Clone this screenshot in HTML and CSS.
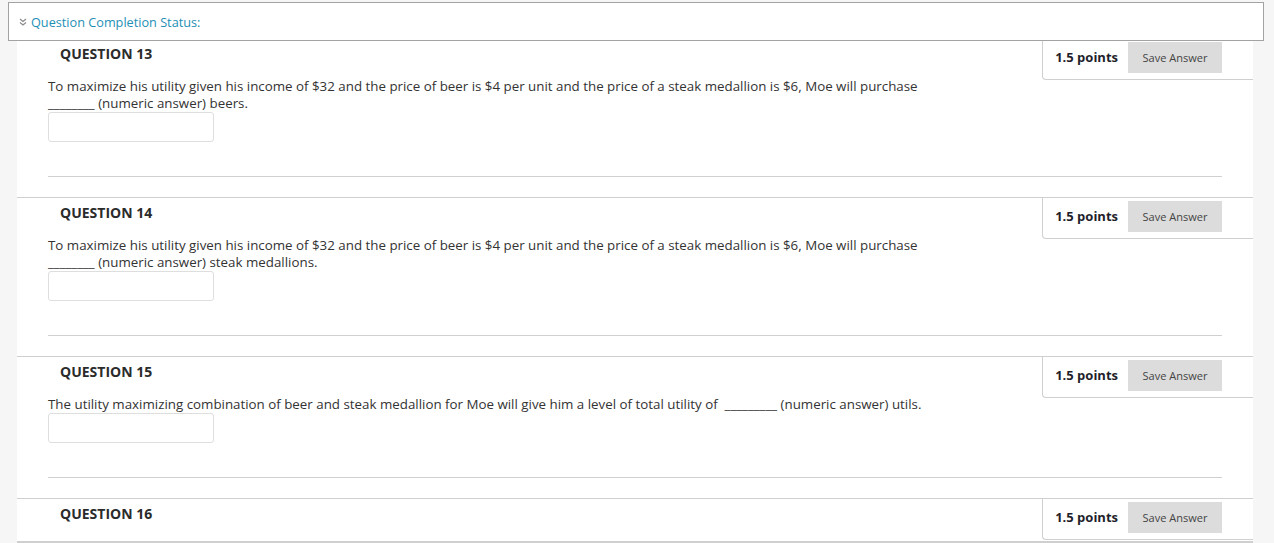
FILE: index.html
```html
<!DOCTYPE html>
<html>
<head>
	<meta charset="utf-8">
	<meta name="viewport" content="width=device-width, initial-scale=1">
	<title>Take Test</title>

	<link rel="stylesheet" href="styles.css">
</head>
<body>
	<div class="status-bar">
		<svg class="chev" width="8" height="8" viewBox="0 0 8 8"><path d="M1 1 L4 3.5 L7 1 M1 4.5 L4 7 L7 4.5" fill="none" stroke="#8a8a8a" stroke-width="1.2"/></svg>
		<span>Question Completion Status:</span>
	</div>

	<main>
		<ul class="questions">
			<li class="question">
				<div class="points">
					<span class="pts">1.5 points</span>
					<button class="save">Save Answer</button>
				</div>
				<h3>QUESTION 13</h3>
				<div class="q-body">
					<p>To maximize his utility given his income of $32 and the price of beer is $4 per unit and the price of a steak medallion is $6, Moe will purchase ________ (numeric answer) beers.</p>
					<input type="text" class="answer">
					<hr>
				</div>
			</li>
			<li class="question">
				<div class="points">
					<span class="pts">1.5 points</span>
					<button class="save">Save Answer</button>
				</div>
				<h3>QUESTION 14</h3>
				<div class="q-body">
					<p>To maximize his utility given his income of $32 and the price of beer is $4 per unit and the price of a steak medallion is $6, Moe will purchase ________ (numeric answer) steak medallions.</p>
					<input type="text" class="answer">
					<hr>
				</div>
			</li>
			<li class="question">
				<div class="points">
					<span class="pts">1.5 points</span>
					<button class="save">Save Answer</button>
				</div>
				<h3>QUESTION 15</h3>
				<div class="q-body">
					<p>The utility maximizing combination of beer and steak medallion for Moe will give him a level of total utility of &nbsp;_________ (numeric answer) utils.</p>
					<input type="text" class="answer">
					<hr>
				</div>
			</li>
			<li class="question">
				<div class="points">
					<span class="pts">1.5 points</span>
					<button class="save">Save Answer</button>
				</div>
				<h3>QUESTION 16</h3>
				<div class="q-body">
					<p>At the utility maximizing combination of beer and steak medallion, the marginal utility per dollar spent on beer is equal to ________ (numeric answer).</p>
					<input type="text" class="answer">
					<hr>
				</div>
			</li>
		</ul>
	</main>
	<div class="bottom-edge"></div>
</body>
</html>
```

FILE: styles.css
```css
* {
	margin: 0;
	padding: 0;
	box-sizing: border-box;
}

body {
	font-family: "Open Sans", "Noto Sans", sans-serif;
	color: #333;
	background: #f6f6f6;
	overflow: hidden;
}

/* sticky status header */
.status-bar {
	position: fixed;
	top: 2px;
	left: 8px;
	width: 1256px;
	height: 39px;
	display: flex;
	align-items: center;
	gap: 4px;
	padding-left: 10px;
	background: #fff;
	border: 1px solid #a3a3a3;
	font-size: 12.7px;
	color: #1e8fb5;
	z-index: 5;
}

.status-bar .chev {
	margin-top: 1px;
}

main {
	width: 1236px;
	margin: 38px 0 0 17px;
	background: #fff;
}

.questions {
	list-style: none;
}

.question {
	border-top: 1px solid #cfcfcf;
	padding-bottom: 20px;
}

.points {
	float: right;
	display: flex;
	align-items: center;
	gap: 10px;
	padding: 3px 31px 6px 12px;
	border-left: 1px solid #cfcfcf;
	border-bottom: 1px solid #cfcfcf;
	border-bottom-left-radius: 4px;
}

.pts {
	font-size: 13px;
	font-weight: bold;
	color: #1f1f2b;
	margin-top: -1px;
}

.save {
	width: 94px;
	height: 31px;
	border: none;
	background: #dcdcdc;
	font-family: "Open Sans", "Noto Sans", sans-serif;
	font-size: 11px;
	color: #444;
}

.question h3 {
	padding: 5px 0 0 43px;
	font-size: 14px;
	line-height: 20px;
	font-weight: bold;
	color: #2b2b2b;
}

.q-body {
	padding: 0 31px;
	margin-top: 14px;
}

.q-body p {
	max-width: 915px;
	font-size: 13.33px;
	line-height: 17px;
}

.answer {
	display: block;
	width: 166px;
	height: 30px;
	border: 1px solid #dedede;
	border-radius: 3px;
	background: #fff;
}

.q-body hr {
	margin-top: 34px;
	border: none;
	border-top: 1px solid #d0d0d0;
}

.bottom-edge {
	position: fixed;
	left: 17px;
	bottom: 0;
	width: 1236px;
	height: 2px;
	background: #cfcfcf;
}
```
